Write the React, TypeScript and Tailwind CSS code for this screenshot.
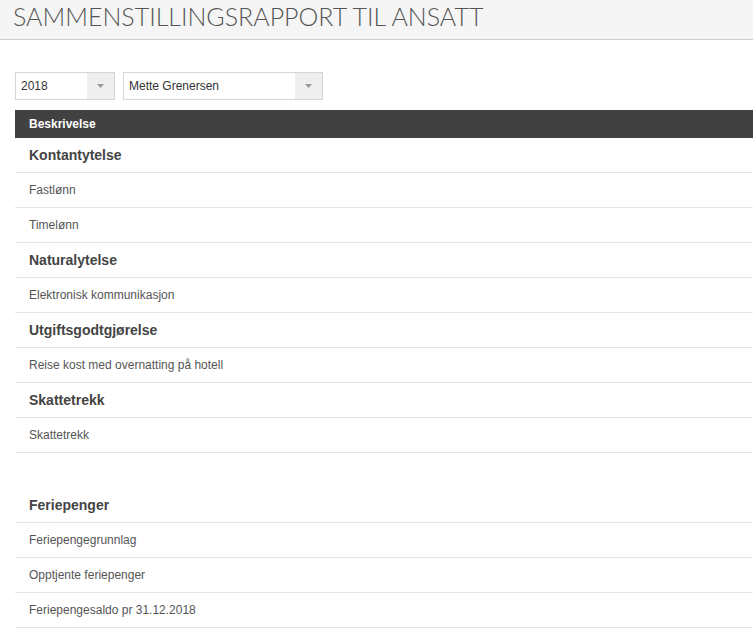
import { Fragment } from "react";

const groups: Array<{ title: string; items: string[]; spaceBefore?: boolean }> = [
  { title: "Kontantytelse", items: ["Fastlønn", "Timelønn"] },
  { title: "Naturalytelse", items: ["Elektronisk kommunikasjon"] },
  { title: "Utgiftsgodtgjørelse", items: ["Reise kost med overnatting på hotell"] },
  { title: "Skattetrekk", items: ["Skattetrekk"] },
  {
    title: "Feriepenger",
    items: ["Feriepengegrunnlag", "Opptjente feriepenger", "Feriepengesaldo pr 31.12.2018"],
    spaceBefore: true,
  },
];

function Select({ value, width }: { value: string; width: string }) {
  return (
    <div className={`flex h-[28px] ${width} border border-[#d5d5d5] bg-white`}>
      <span className="flex flex-1 items-center pl-[5px] text-[12px] text-[#333]">{value}</span>
      <span className="flex w-[27px] items-center justify-center bg-[#eeeeee]">
        <svg width="7" height="4" viewBox="0 0 7 4">
          <path d="M0 0h7L3.5 4z" fill="#999" />
        </svg>
      </span>
    </div>
  );
}

export default function App() {
  return (
    <div className="min-h-[631px] overflow-hidden bg-white font-['Liberation_Sans',Arial,sans-serif]">
      <header className="h-[40px] border-b border-[#cccccc] bg-[#f5f5f5] pl-[13px]">
        <h1 className="font-['Lato',sans-serif] text-[25px] leading-[33px] font-light text-[#555]">
          SAMMENSTILLINGSRAPPORT TIL ANSATT
        </h1>
      </header>

      <div className="flex gap-[8px] pl-[15px] pt-[32px]">
        <Select value="2018" width="w-[100px]" />
        <Select value="Mette Grenersen" width="w-[200px]" />
      </div>

      <div className="ml-[15px] mt-[10px]">
        <div className="flex h-[28px] items-center bg-[#414141] pl-[14px] text-[12px] font-bold text-white">
          Beskrivelse
        </div>
        {groups.map((group) => (
          <Fragment key={group.title}>
            {group.spaceBefore && <div className="h-[35px]" />}
            <div className="flex h-[35px] items-center border-b border-[#e5e5e5] pl-[14px] text-[14px] font-bold text-[#444]">
              {group.title}
            </div>
            {group.items.map((item) => (
              <div
                key={item}
                className="flex h-[35px] items-center border-b border-[#e5e5e5] pl-[14px] text-[12px] text-[#555]"
              >
                {item}
              </div>
            ))}
          </Fragment>
        ))}
      </div>
    </div>
  );
}
